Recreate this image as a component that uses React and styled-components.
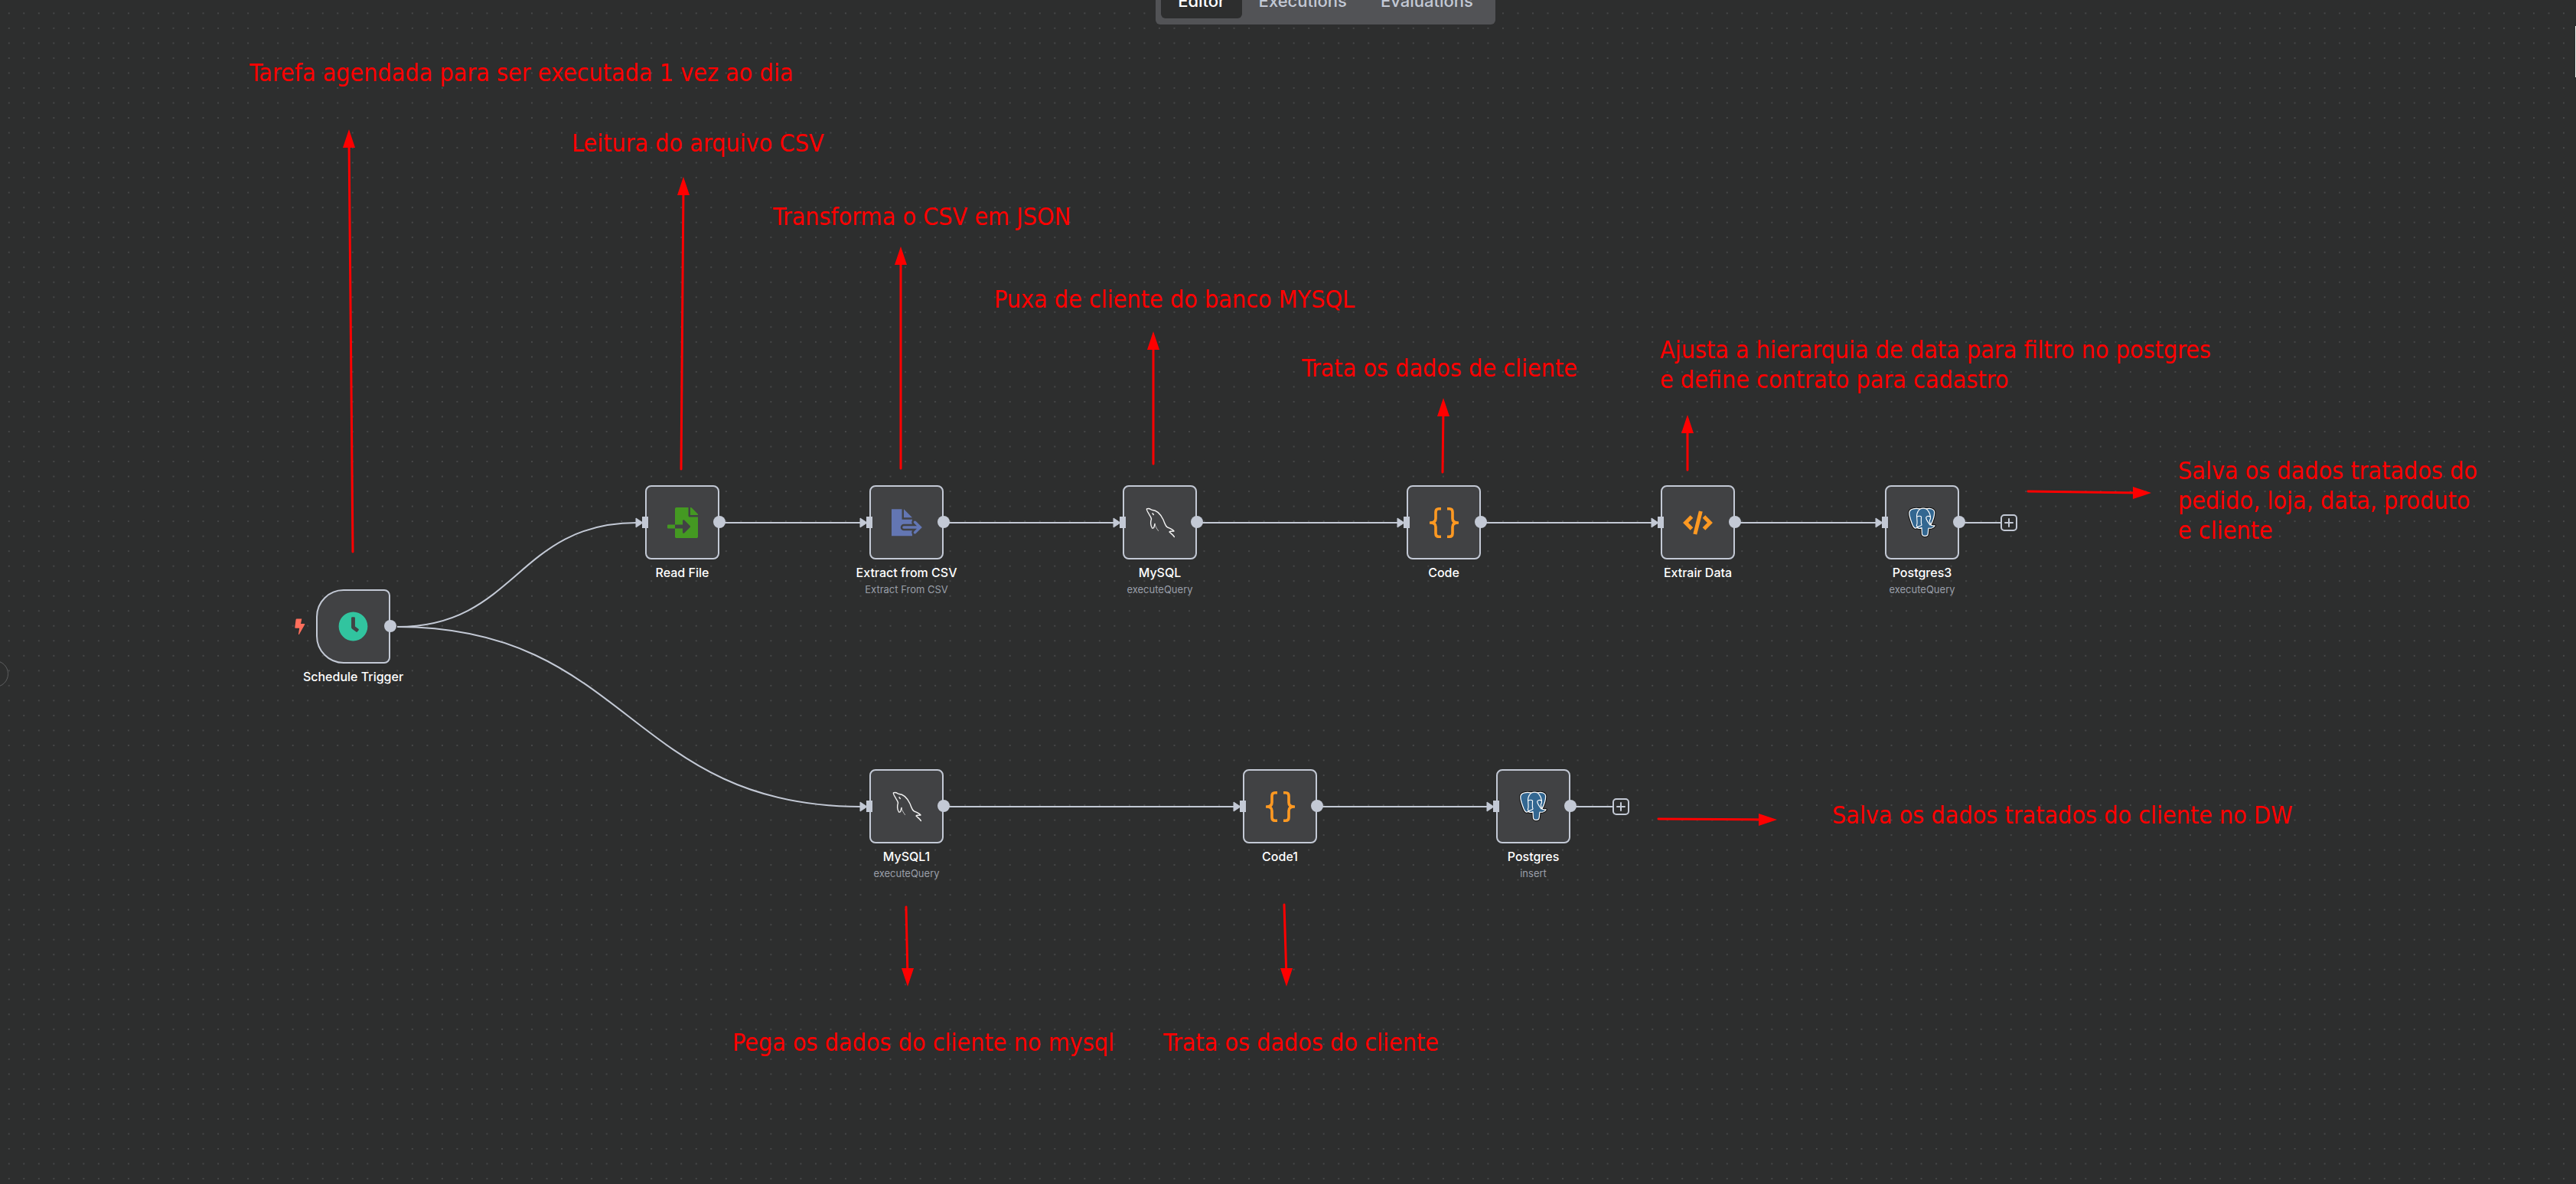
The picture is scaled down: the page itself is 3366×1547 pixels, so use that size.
import React from 'react';
import styled, { createGlobalStyle } from 'styled-components';
import { FaClock, FaFileImport } from 'react-icons/fa';

const line = '#c3c9d5';
const canvasColor = '#2d2e2e';
const nodeColor = '#414244';
const note = '#ff0000';

const GlobalStyle = createGlobalStyle`
  html, body { margin: 0; background: ${canvasColor}; }
  body { font-family: Inter, "Liberation Sans", sans-serif; }
  *, *::before, *::after { box-sizing: border-box; }
`;

const Canvas = styled.main`
  position: relative;
  min-height: 100vh;
  overflow: hidden;
  background: ${canvasColor};
`;

const Layer = styled.svg`
  position: absolute;
  inset: 0;
  width: 100%;
  height: 100%;
  pointer-events: none;
`;

const Header = styled.header`
  position: relative;
  display: flex;
  justify-content: center;
  margin-top: -29px;
  padding-left: 98px;
`;

const Tabs = styled.nav`
  display: flex;
  padding: 8px 7px;
  border-radius: 6px;
  background: #525356;
`;

const Tab = styled.button`
  height: 45px;
  padding: 0 22px;
  border: 0;
  border-radius: 6px;
  background: ${(p) => (p.$active ? canvasColor : 'transparent')};
  color: ${(p) => (p.$active ? '#ffffff' : line)};
  font: 500 22px/45px Inter, "Liberation Sans", sans-serif;
`;

const Node = styled.article`
  position: absolute;
  left: ${(p) => p.$x}px;
  top: ${(p) => p.$y}px;
  width: 97px;
  display: flex;
  flex-direction: column;
  align-items: center;
`;

const Box = styled.div`
  position: relative;
  display: flex;
  align-items: center;
  justify-content: center;
  width: 97px;
  height: 97px;
  border: 2px solid ${line};
  border-radius: ${(p) => (p.$trigger ? '36px 8px 8px 36px' : '8px')};
  background: ${nodeColor};
  color: ${(p) => p.$color};

  svg { display: block; }
`;

const Input = styled.span`
  position: absolute;
  left: -6px;
  top: 39px;
  width: 8px;
  height: 15px;
  background: ${line};
`;

const Output = styled.span`
  position: absolute;
  right: -10px;
  top: 38px;
  width: 16px;
  height: 16px;
  border-radius: 50%;
  background: ${line};
`;

const Bolt = styled.span`
  position: absolute;
  left: -30px;
  top: 36px;
  color: #ff6f5c;
`;

const Title = styled.h2`
  margin: 7px 0 0;
  color: #ffffff;
  font-size: 16px;
  font-weight: 500;
  line-height: 20px;
  white-space: nowrap;
`;

const Subtitle = styled.p`
  margin: 4px 0 0;
  color: #9a9fa9;
  font-size: 13px;
  line-height: 16px;
  white-space: nowrap;
`;

const AddButton = styled.button`
  position: absolute;
  left: ${(p) => p.$x}px;
  top: ${(p) => p.$y}px;
  display: grid;
  place-items: center;
  width: 22px;
  height: 22px;
  padding: 0;
  border: 2px solid ${line};
  border-radius: 5px;
  background: ${canvasColor};
  color: ${line};
`;

const Note = styled.p`
  position: absolute;
  left: ${(p) => p.$x}px;
  top: ${(p) => p.$y}px;
  margin: 0;
  color: ${note};
  font-family: "DejaVu Sans Condensed", "DejaVu Sans", sans-serif;
  font-size: 32px;
  line-height: 39px;
  white-space: pre;
`;

const PanelHandle = styled.span`
  position: absolute;
  left: -24px;
  top: 863px;
  width: 35px;
  height: 35px;
  border: 1px solid #5d5e5f;
  border-radius: 50%;
`;

const ScrollMark = styled.span`
  position: absolute;
  right: 0;
  top: 34px;
  width: 1px;
  height: 67px;
  background: #f2f2f2;
`;

const BoltIcon = () => (
  <svg width="14" height="22" viewBox="0 0 14 22" fill="currentColor">
    <path d="M2.600 .5H9.300L8 7H12.700Q13.600 7.200 13.200 8L6 20.700Q5.200 21.500 5 20.400L6.200 12.700H1Q.2 12.500 .3 11.800L1.600 1.400Q1.800 .5 2.600 .5Z" />
  </svg>
);

const ExportIcon = () => (
  <svg width="40" height="36" viewBox="0 0 40 36" fill="none">
    <path d="M0 .3H13.500V13.700H27V35.300H0Z" fill="currentColor" />
    <path d="M16 .3L27 11.300H16Z" fill="currentColor" />
    <path d="M16 24H37M30.500 17.300L37.300 24L30.500 30.700" stroke={nodeColor} strokeWidth="8.500" strokeLinecap="round" />
    <path d="M16 24H37M30.500 17.300L37.300 24L30.500 30.700" stroke="currentColor" strokeWidth="3.600" strokeLinecap="round" />
  </svg>
);

const CodeIcon = () => (
  <svg width="39" height="32" viewBox="0 0 39 32" fill="none" stroke="currentColor" strokeWidth="5">
    <path d="M11.500 8L3.600 16L11.500 24M27.500 8L35.400 16L27.500 24" />
    <path d="M23.300 1L15.800 31" strokeLinecap="butt" />
  </svg>
);

const Dolphin = () => (
  <svg width="38" height="40" viewBox="0 0 38 40" fill="none" stroke="#f2f2f2" strokeWidth="1.400" strokeLinecap="round" strokeLinejoin="round">
    <path d="M1.500 2C4 .6 5.800 2 8 3.200C15 3.500 20 9.500 23 16C25 20.500 25.500 24 28.500 26C32 27.200 35 28.500 37 31C34.500 31 31.500 31 31 32C33 34 35.500 35.500 37.500 38.500" />
    <path d="M1.500 2C.8 3 2.500 5.500 4 8C5 10.500 7 12.500 7.500 15C6.500 18 6 23 8.500 27C11.500 28 11 24 12 21.500" />
    <path d="M12 22C13 26 15 28 16.500 30.500" strokeWidth="1" opacity=".7" />
    <path d="M9 7.800L10.300 9.500" />
  </svg>
);

const Braces = () => (
  <svg width="38" height="40" viewBox="0 0 38 40" fill="none" stroke="currentColor" strokeWidth="3.600" strokeLinejoin="round">
    <path d="M15 1.800H12Q8 1.800 8 6V14.500Q8 20 1 20Q8 20 8 25.500V34Q8 38.200 12 38.200H15" />
    <path d="M23 1.800H26Q30 1.800 30 6V14.500Q30 20 37 20Q30 20 30 25.500V34Q30 38.200 26 38.200H23" />
  </svg>
);

const elephantBody = 'M7 2C12 .8 15 2 16 2.200C19 .8 22 .8 25 2C30 .5 36 2 36 7C36 14 33 20 31 24C32 26 34 25 36.500 25C35 28 31 29 28 28.500C27 31 28 35 26.500 38C24 40 20 39.500 19 37L18.500 28C16 29.500 13 29 12 27.500C9 30 7 27 5.500 23C3 16 1 11 1.500 7C2 4 4 2.500 7 2Z';

const Elephant = () => (
  <svg width="37" height="39" viewBox="0 0 38 41" strokeLinejoin="round" strokeLinecap="round">
    <path d={elephantBody} fill="#336791" stroke="#111111" strokeWidth="3.500" />
    <path d={elephantBody} fill="#336791" stroke="#ffffff" strokeWidth="1.300" />
    <path d="M16 2.200C12 6 11 11 12 16C12 19 13 22 11.500 25L13 27.500M12 13C14 11.500 17 11.500 18 13C18 17 17 20 18.500 24C17 26 15 25 13 27.500M25 2C29 6 31 11 30.500 16C28 18 30 21 31 24M30 12.500C28 11.500 25 12 24.500 14C25 18 28 21 30 24" fill="none" stroke="#ffffff" strokeWidth="1.200" />
  </svg>
);

const Plus = () => (
  <svg width="12" height="12" viewBox="0 0 12 12" stroke="currentColor" strokeWidth="2" strokeLinecap="round">
    <path d="M6 1V11M1 6H11" />
  </svg>
);

const nodes = [
  { x: 413, y: 770, title: 'Schedule Trigger', icon: <FaClock size={39} />, color: '#31c49f', trigger: true },
  { x: 843, y: 634, title: 'Read File', icon: <FaFileImport size={40} />, color: '#449922' },
  { x: 1136, y: 634, title: 'Extract from CSV', sub: 'Extract From CSV', icon: <ExportIcon />, color: '#6376b3' },
  { x: 1467, y: 634, title: 'MySQL', sub: 'executeQuery', icon: <Dolphin /> },
  { x: 1838, y: 634, title: 'Code', icon: <Braces />, color: '#ff9922' },
  { x: 2170, y: 634, title: 'Extrair Data', icon: <CodeIcon />, color: '#ff9922' },
  { x: 2463, y: 634, title: 'Postgres3', sub: 'executeQuery', icon: <Elephant /> },
  { x: 1136, y: 1005, title: 'MySQL1', sub: 'executeQuery', icon: <Dolphin /> },
  { x: 1624, y: 1005, title: 'Code1', icon: <Braces />, color: '#ff9922' },
  { x: 1955, y: 1005, title: 'Postgres', sub: 'insert', icon: <Elephant /> },
];

const links = [
  [940, 1136, 683],
  [1233, 1467, 683],
  [1564, 1838, 683],
  [1935, 2170, 683],
  [2267, 2463, 683],
  [1233, 1624, 1054],
  [1721, 1955, 1054],
];

const notes = [
  [326, 76, 'Tarefa agendada para ser executada 1 vez ao dia'],
  [747, 168, 'Leitura do arquivo CSV'],
  [1010, 264, 'Transforma o CSV em JSON'],
  [1299, 372, 'Puxa de cliente do banco MYSQL'],
  [1701, 462, 'Trata os dados de cliente'],
  [2169, 438, 'Ajusta a hierarquia de data para filtro no postgres\ne define contrato para cadastro'],
  [2846, 596, 'Salva os dados tratados do\npedido, loja, data, produto\ne cliente'],
  [2394, 1046, 'Salva os dados tratados do cliente no DW'],
  [957, 1343, 'Pega os dados do cliente no mysql'],
  [1520, 1343, 'Trata os dados do cliente'],
];

const arrows = [
  [461, 721, 456, 169, 'up'],
  [890, 613, 893, 231, 'up'],
  [1177, 612, 1177, 322, 'up'],
  [1507, 606, 1507, 433, 'up'],
  [1885, 617, 1886, 520, 'up'],
  [2205, 614, 2205, 542, 'up'],
  [2650, 642, 2811, 644, 'right'],
  [2167, 1070, 2322, 1071, 'right'],
  [1184, 1185, 1186, 1289, 'down'],
  [1678, 1182, 1681, 1289, 'down'],
];

const heads = {
  up: '0,0 -8,24 8,24',
  down: '0,0 -8,-24 8,-24',
  right: '0,0 -24,-8 -24,8',
};
const necks = { up: [0, 12], down: [0, -12], right: [-12, 0] };

export default function App() {
  return (
    <Canvas>
      <GlobalStyle />
      <Layer aria-hidden="true">
        <defs>
          <pattern id="dots" x="2" y="7.600" width="19.522" height="19.522" patternUnits="userSpaceOnUse">
            <circle cx="9.760" cy="9.760" r="0.700" fill="#6e7071" />
          </pattern>
        </defs>
        <rect width="100%" height="100%" fill="url(#dots)" />
        <g fill="none" stroke={line} strokeWidth="2">
          <path d="M519 819C675 819 675 683 832 683" />
          <path d="M519 819C822 819 822 1054 1125 1054" />
          {links.map(([from, to, y]) => (
            <path key={`${from}-${y}`} d={`M${from} ${y}H${to - 8}`} />
          ))}
          <path d="M2560 683H2615M2052 1054H2107" />
        </g>
        <g fill={line}>
          {[[843, 683], [1136, 1054], ...links.map(([, to, y]) => [to, y])].map(([x, y]) => (
            <polygon key={`${x}-${y}`} points={`${x - 12},${y - 6} ${x - 3},${y} ${x - 12},${y + 6}`} stroke={line} />
          ))}
        </g>
      </Layer>
      <Header>
        <Tabs aria-label="Workflow views">
          <Tab type="button" $active>Editor</Tab>
          <Tab type="button">Executions</Tab>
          <Tab type="button">Evaluations</Tab>
        </Tabs>
      </Header>
      {nodes.map((n) => (
        <Node key={n.title} $x={n.x} $y={n.y}>
          <Box $trigger={n.trigger} $color={n.color}>
            {n.icon}
            {n.trigger ? <Bolt><BoltIcon /></Bolt> : <Input />}
            <Output />
          </Box>
          <Title>{n.title}</Title>
          {n.sub && <Subtitle>{n.sub}</Subtitle>}
        </Node>
      ))}
      <AddButton type="button" aria-label="Add node after Postgres3" $x={2614} $y={672}><Plus /></AddButton>
      <AddButton type="button" aria-label="Add node after Postgres" $x={2107} $y={1043}><Plus /></AddButton>
      <Layer aria-hidden="true">
        {arrows.map(([x1, y1, x2, y2, dir]) => (
          <g key={`${x1}-${y1}`}>
            <line x1={x1} y1={y1} x2={x2 + necks[dir][0]} y2={y2 + necks[dir][1]} stroke={note} strokeWidth="3" strokeLinecap="round" />
            <polygon points={heads[dir]} transform={`translate(${x2} ${y2})`} fill={note} />
          </g>
        ))}
      </Layer>
      {notes.map(([x, y, text]) => (
        <Note key={text} $x={x} $y={y}>{text}</Note>
      ))}
      <PanelHandle />
      <ScrollMark />
    </Canvas>
  );
}
